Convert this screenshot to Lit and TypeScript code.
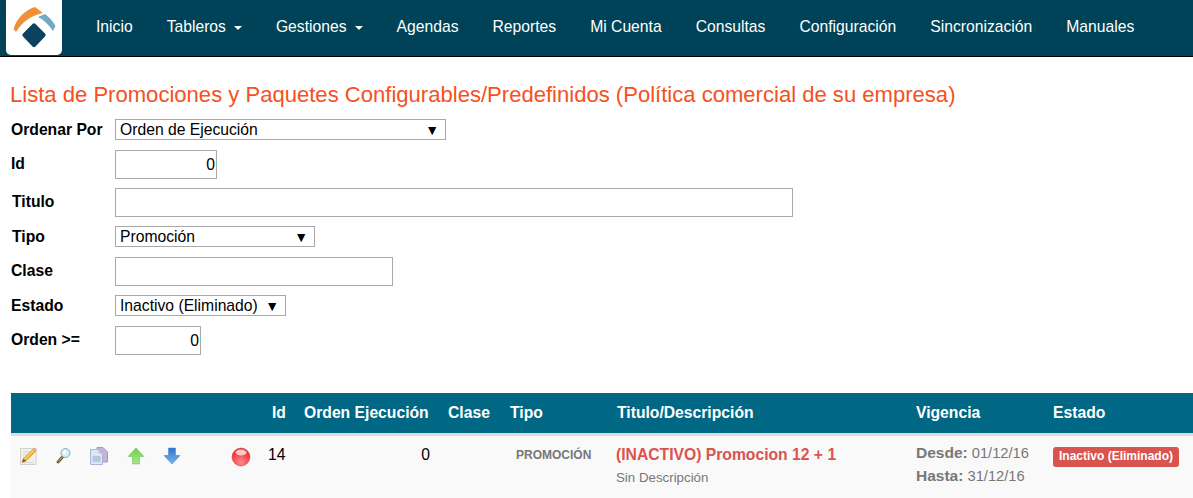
import { LitElement, html, css, svg } from "lit";
import { customElement } from "lit/decorators.js";

const NAV = [
  { label: "Inicio" },
  { label: "Tableros", caret: true },
  { label: "Gestiones", caret: true },
  { label: "Agendas" },
  { label: "Reportes" },
  { label: "Mi Cuenta" },
  { label: "Consultas" },
  { label: "Configuración" },
  { label: "Sincronización" },
  { label: "Manuales" }
];

const logo = svg`
  <path d="M13.500 29C17 18 25 10 35 7L43 13C32 15 22 22 16 32Z" fill="#f08f33"/>
  <path d="M38 17L45 14C49 17 53 21 55.500 26L53 31C49 25 44 20 38 17Z" fill="#74a9c6"/>
  <path d="M32.500 24Q34 22.500 35.500 24L45 33.500Q46.500 35 45 36.500L35.500 46.500Q34 48 32.500 46.500L23 36.500Q21.500 35 23 33.500Z" fill="#0b4260"/>
`;

const editIcon = svg`
  <rect x="1.500" y="1.500" width="15.500" height="16" fill="#f1f1ec" stroke="#d2d2cd"/>
  <path d="M4 5H10M4 8H8M4 11H6M4 15.500H15" stroke="#d8d8d3"/>
  <path d="M3 15.500L4.500 11.500L14.500 1.500L17 4L7 14Z" fill="#f4b02a" stroke="#d08a1c" stroke-width=".5"/>
  <path d="M5 12L14.500 2.500L15.500 3.500L6 13Z" fill="#fad35c"/>
  <path d="M3 15.500L4.500 11.500L7 14Z" fill="#6b5a45"/>
  <path d="M14.500 1.500L15.500 .5L18 3L17 4Z" fill="#ee9ec8"/>
`;

const searchIcon = svg`
  <path d="M3 15L7.500 10" stroke="#7d5a36" stroke-width="3" stroke-linecap="round"/>
  <path d="M3 14.500L7 10.500" stroke="#d0a877" stroke-width="1"/>
  <circle cx="10.500" cy="6" r="4.500" fill="#d3effa" stroke="#8aa6bb" stroke-width="1"/>
  <circle cx="9.700" cy="5.200" r="1.700" fill="#fff"/>
`;

const copyIcon = svg`
  <path d="M7 .5H13L17.500 5V15H7Z" fill="#c3b5da" stroke="#a697c4"/>
  <path d="M.5 2.500H8.500L12.500 6.500V17.500H.5Z" fill="#dee6f3" stroke="#a9b7d2"/>
  <path d="M8.500 2.500V6.500H12.500Z" fill="#b3c1da"/>
  <rect x="2.500" y="9" width="8" height="6" fill="#b6c6e2"/>
`;

const upIcon = svg`
  <defs><linearGradient id="up" x1="0" y1="0" x2="0" y2="1">
    <stop offset="0" stop-color="#6fd14a"/><stop offset="1" stop-color="#a3e88a"/>
  </linearGradient></defs>
  <path d="M9 1L17 9.500H12.500V17H5.500V9.500H1Z" fill="url(#up)" stroke="#5fbf45" stroke-width=".5"/>
`;

const downIcon = svg`
  <defs><linearGradient id="down" x1="0" y1="0" x2="0" y2="1">
    <stop offset="0" stop-color="#2f74c8"/><stop offset="1" stop-color="#7db4f0"/>
  </linearGradient></defs>
  <path d="M5.500 1H12.500V8.500H17L9 17L1 8.500H5.500Z" fill="url(#down)" stroke="#3d7fd0" stroke-width=".5"/>
`;

@customElement("app-root")
export class AppRoot extends LitElement {
  static override styles = css`
    :host {
      display: block;
      height: 498px;
      overflow: hidden;
      background: #fff;
      color: #000;
      font-family: "Liberation Sans", Arial, sans-serif;
      font-size: 14px;
    }

    .navbar {
      display: flex;
      height: 56px;
      background: #004358;
      border-bottom: 1px solid #000;
    }
    .brand {
      width: 56px;
      height: 55px;
      margin-left: 6px;
      background: #fff;
      border-radius: 0 0 5px 5px;
    }
    .brand svg {
      display: block;
    }
    .nav {
      display: flex;
      gap: 34px;
      margin-left: 34px;
      align-items: center;
      height: 54px;
      color: #fff;
      font-size: 15.700px;
    }
    .caret {
      display: inline-block;
      margin-left: 8px;
      vertical-align: middle;
      border-top: 4px solid #fff;
      border-left: 4px solid transparent;
      border-right: 4px solid transparent;
    }

    h1 {
      margin: 26px 0 0 10px;
      font-size: 22.070px;
      line-height: 24px;
      font-weight: 400;
      color: #f4511e;
    }

    .form {
      display: grid;
      grid-template-columns: 105px auto;
      justify-content: start;
      justify-items: start;
      align-items: center;
      row-gap: 9px;
      margin: 12px 0 0 10px;
      font-size: 15.700px;
    }
    label {
      font-weight: 700;
      margin-left: 1px;
    }
    label.up {
      margin-bottom: 2px;
    }
    label.wide {
      margin-left: 2px;
    }
    input {
      box-sizing: border-box;
      height: 29px;
      padding: 0 1px;
      border: 1px solid #a9a9a9;
      font: 15.700px "Liberation Sans", Arial, sans-serif;
      text-align: right;
      color: #000;
      outline: none;
    }
    .select {
      box-sizing: border-box;
      display: flex;
      justify-content: space-between;
      align-items: center;
      height: 21px;
      margin-bottom: 1px;
      padding: 0 6px 0 4px;
      border: 1px solid #a9a9a9;
      white-space: nowrap;
    }
    .arrow {
      font-size: 14px;
    }

    .table {
      display: grid;
      grid-template-columns: 253px 32px 144px 62px 107px 299px 137px 148px;
      margin: 38px 0 0 11px;
    }
    .head {
      display: flex;
      align-items: center;
      height: 40px;
      padding: 0 8px;
      background: #006784;
      border-bottom: 3px solid #ddd;
      color: #fff;
      font-weight: 700;
      font-size: 15.700px;
      white-space: nowrap;
    }
    .cell {
      height: 62px;
      padding: 7px 8px 0;
      background: #f9f9f9;
      font-size: 15.700px;
      line-height: 23px;
    }
    .right {
      padding-right: 10px;
      text-align: right;
    }
    .actions {
      display: flex;
      align-items: flex-start;
      padding-top: 11px;
      height: 51px;
    }
    .actions svg {
      display: block;
      flex: none;
      margin-right: 18px;
    }
    .actions svg.copy {
      margin: 0 19px 0 -1px;
    }
    .actions .lamp {
      margin: 0 0 0 32px;
    }
    .id {
      padding-left: 4px;
    }
    .kind {
      color: #777;
      padding-left: 14px;
      padding-top: 8px;
      font-size: 12px;
      font-weight: 700;
    }
    .name {
      margin-left: -1px;
      color: #d9534f;
      font-weight: 700;
    }
    .desc {
      margin-left: -1px;
      color: #777;
      font-size: 13.300px;
    }
    .dates {
      padding-top: 6px;
      color: #777;
      font-size: 14.700px;
    }
    .dates b {
      font-size: 15.500px;
      line-height: 1;
    }
    .badge {
      display: inline-block;
      margin-top: 4px;
      padding: 3px 6px 4px;
      border-radius: 3px;
      background: #d9534f;
      color: #fff;
      font-size: 12px;
      font-weight: 700;
      line-height: 13px;
      white-space: nowrap;
    }
    .badge-cell {
      line-height: normal;
    }
  `;

  private select(value: string, width: number) {
    return html`<div class="select" style="width: ${width}px">
      <span>${value}</span><span class="arrow">▼</span>
    </div>`;
  }

  private icon(content: unknown, name = "") {
    return html`<svg class=${name} width="18" height="18" viewBox="0 0 18 18">${content}</svg>`;
  }

  override render() {
    return html`
      <nav class="navbar">
        <div class="brand">
          <svg width="56" height="55" viewBox="6 0 56 55">${logo}</svg>
        </div>
        <div class="nav">
          ${NAV.map((item) => html`<span>${item.label}${item.caret ? html`<span class="caret"></span>` : ""}</span>`)}
        </div>
      </nav>

      <h1>Lista de Promociones y Paquetes Configurables/Predefinidos (Política comercial de su empresa)</h1>

      <div class="form">
        <label>Ordenar Por</label>
        ${this.select("Orden de Ejecución", 331)}
        <label class="up">Id</label>
        <input style="width: 102px" value="0" />
        <label class="up wide">Titulo</label>
        <input style="width: 678px" />
        <label class="wide">Tipo</label>
        ${this.select("Promoción", 200)}
        <label class="up">Clase</label>
        <input style="width: 278px" />
        <label>Estado</label>
        ${this.select("Inactivo (Eliminado)", 171)}
        <label class="up">Orden &gt;=</label>
        <input style="width: 86px" value="0" />
      </div>

      <div class="table">
        <div class="head"></div>
        <div class="head">Id</div>
        <div class="head">Orden Ejecución</div>
        <div class="head">Clase</div>
        <div class="head">Tipo</div>
        <div class="head">Titulo/Descripción</div>
        <div class="head">Vigencia</div>
        <div class="head">Estado</div>

        <div class="cell actions">
          ${this.icon(editIcon)} ${this.icon(searchIcon)} ${this.icon(copyIcon, "copy")} ${this.icon(upIcon)} ${this.icon(downIcon)}
          <svg class="lamp" width="20" height="20" viewBox="0 0 20 20">
            <defs>
              <radialGradient id="lamp" cx=".5" cy=".8" r=".7">
                <stop offset="0" stop-color="#ff8a8a" />
                <stop offset="1" stop-color="#ee2a30" />
              </radialGradient>
            </defs>
            <circle cx="10" cy="10" r="9" fill="url(#lamp)" stroke="#d8343a" stroke-width=".5" />
            <ellipse cx="10" cy="5.500" rx="5.500" ry="3" fill="#fbc8c8" />
          </svg>
        </div>
        <div class="cell id">14</div>
        <div class="cell right">0</div>
        <div class="cell"></div>
        <div class="cell kind">PROMOCIÓN</div>
        <div class="cell">
          <div class="name">(INACTIVO) Promocion 12 + 1</div>
          <div class="desc">Sin Descripción</div>
        </div>
        <div class="cell dates">
          <div><b>Desde:</b> 01/12/16</div>
          <div><b>Hasta:</b> 31/12/16</div>
        </div>
        <div class="cell badge-cell"><span class="badge">Inactivo (Eliminado)</span></div>
      </div>
    `;
  }
}

declare global {
  interface HTMLElementTagNameMap {
    "app-root": AppRoot;
  }
}
